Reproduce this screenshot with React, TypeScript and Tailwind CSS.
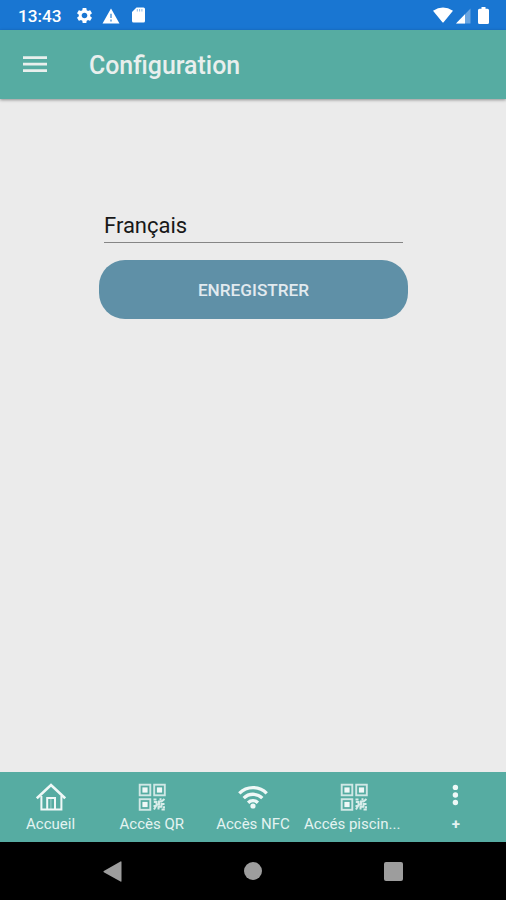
import { MdSettings } from "react-icons/md";

function HomeIcon() {
  return (
    <svg width="30" height="28" viewBox="0 0 30 28" fill="none" stroke="currentColor">
      <path d="M0.8 15.4 15 2 29.2 15.4" strokeWidth="2.6" />
      <path d="M5.4 13V26.4H11.2V14.9H19V26.4H25.4V13M11 26.4H19" strokeWidth="2" />
      <path d="M14.9 15V26" strokeWidth="0.8" opacity="0.6" />
    </svg>
  );
}

function QrIcon() {
  return (
    <svg width="28" height="28" viewBox="0 0 28 28" fill="none" stroke="currentColor">
      <g strokeWidth="1.9" opacity="0.8">
        <rect x="1.7" y="1.7" width="10.6" height="10.6" />
        <rect x="16.2" y="1.7" width="10.6" height="10.6" />
        <rect x="1.7" y="16.2" width="10.6" height="10.6" />
      </g>
      <g fill="currentColor" stroke="none">
        <rect x="4.4" y="4.4" width="5.2" height="5.2" />
        <rect x="18.9" y="4.4" width="5.2" height="5.2" />
        <rect x="4.4" y="18.9" width="5.2" height="5.2" />
      </g>
      <path
        d="M15.5 16.4H18.5M21.5 16.2H23.5M15.8 19H18.5V21.5H21V18.5H23.5L26.5 16M15.5 23H18L16 26.5M20.5 26.5V23.8H23.5V21H26.5M25 24.2H27M23.5 26.5H26.8"
        strokeWidth="2"
        opacity="0.85"
      />
    </svg>
  );
}

function WifiIcon() {
  return (
    <svg width="30" height="28" viewBox="0 0 30 28" fill="none" stroke="currentColor" strokeWidth="3.3">
      <path d="M1.3 10.3A19.2 19.2 0 0 1 28.7 10.3" />
      <path d="M5.7 15.1A13.2 13.2 0 0 1 24.3 15.1" />
      <path d="M10.1 19.7A7 7 0 0 1 19.9 19.7" />
      <circle cx="15" cy="23" r="2.6" fill="currentColor" stroke="none" />
    </svg>
  );
}

function DotsIcon() {
  return (
    <svg width="8" height="28" viewBox="0 0 8 28" fill="currentColor">
      <circle cx="4.4" cy="4.4" r="2.7" />
      <circle cx="4.4" cy="12" r="2.7" />
      <circle cx="4.4" cy="19.5" r="2.7" />
    </svg>
  );
}

const labelStyle = "mt-[4px] whitespace-nowrap text-[15px] leading-[18px] text-[#e4f3f1]";

const tabs = [
  { label: "Accueil", icon: <HomeIcon />, className: labelStyle },
  { label: "Accès QR", icon: <QrIcon />, className: labelStyle },
  { label: "Accès NFC", icon: <WifiIcon />, className: labelStyle },
  { label: "Accés piscin...", icon: <QrIcon />, className: `${labelStyle} pr-[4px]` },
  { label: "+", icon: <DotsIcon />, className: `${labelStyle} pl-px font-bold` },
];

export default function App() {
  return (
    <div className="flex h-[900px] w-[506px] flex-col overflow-hidden bg-[#ebebeb] font-['Roboto',sans-serif]">

      {/* Status bar */}
      <div className="flex h-[30px] shrink-0 items-center bg-[#1976d2] pl-[18px] pr-[17px] text-white">
        <span className="w-[57px] pt-[2px] text-[17.2px] font-medium leading-[30px]">13:43</span>
        <MdSettings size={19} className="mt-px" />
        <svg className="ml-2 mt-px" width="18" height="16" viewBox="0 0 18 16">
          <path d="M9 0.5 17.5 15.5H0.5Z" fill="currentColor" />
          <path d="M9 5.8V10M9 11.6V13.4" stroke="#1976d2" strokeWidth="1.5" opacity="0.75" />
        </svg>
        <svg className="ml-3" width="13" height="16" viewBox="0 0 13 16">
          <path d="M4.5 0.5H11.5Q13 0.5 13 2V14Q13 15.5 11.5 15.5H1.5Q0 15.5 0 14V5Z" fill="currentColor" />
          <path d="M5.3 2V4.5M7.6 2V4.5M9.9 2V4.5" stroke="#1976d2" strokeWidth="1" opacity="0.5" />
        </svg>

        <svg className="ml-auto" width="20" height="16" viewBox="0 0 20 16">
          <path d="M0 3.8Q10-3 20 3.8L10.8 15Q10 16 9.2 15Z" fill="currentColor" />
        </svg>
        <svg className="ml-[3px] mt-px" width="15" height="16" viewBox="0 0 15 16">
          <path d="M14.5 0.5V15.5H0Z" fill="currentColor" opacity="0.35" />
          <path d="M9 6.2V15.5H0Z" fill="currentColor" />
        </svg>
        <svg className="ml-[7px]" width="11" height="17" viewBox="0 0 11 17">
          <path d="M3.5 0H7.5V1.8H9.5Q11 1.8 11 3.3V15.5Q11 17 9.5 17H1.5Q0 17 0 15.5V3.3Q0 1.8 1.5 1.8H3.5Z" fill="currentColor" />
        </svg>
      </div>

      {/* Toolbar */}
      <header className="z-10 flex h-[69px] shrink-0 items-center bg-[#56aca2] pl-[23px] text-[#e9efed] shadow-[0_1px_3px_rgba(0,0,0,0.4)]">
        <button aria-label="Menu">
          <svg width="24" height="17" viewBox="0 0 24 17" fill="currentColor">
            <path d="M0 0.2H24V2.9H0ZM0 6.7H24V9.4H0ZM0 13.2H24V15.9H0Z" />
          </svg>
        </button>
        <h1 className="ml-[42px] mt-[3px] text-[24.9px] font-medium leading-8">Configuration</h1>
      </header>

      {/* Form */}
      <main className="flex flex-1 flex-col items-center pl-px pt-[110px]">
        <div className="h-[34px] w-[299px] border-b-[1.5px] border-[#858585] text-[22px] leading-[33px] text-[#181818]">
          Français
        </div>
        <button className="mt-[17px] h-[59px] w-[309px] rounded-[26px] bg-[#5f90a7] pt-[3px] text-[17.2px] font-medium text-[#e2eaef]">
          ENREGISTRER
        </button>
      </main>

      {/* Bottom tabs */}
      <nav className="grid h-[70px] shrink-0 grid-cols-5 bg-[#56aca2] text-[#eff8f7]">
        {tabs.map((tab) => (
          <div key={tab.label} className="flex flex-col items-center pt-[11px]">
            {tab.icon}
            <span className={tab.className}>{tab.label}</span>
          </div>
        ))}
      </nav>

      {/* System navigation */}
      <div className="flex h-[58px] shrink-0 items-center justify-between bg-black pl-[103px] pr-[103px] text-[#9d9d9d]">
        <svg width="19" height="21" viewBox="0 0 19 21">
          <path d="M18.5 1V20Q18.5 21 17.5 20.4L0.8 11.2Q0 10.6 0.8 10L17.5 0.4Q18.5 0 18.5 1Z" fill="currentColor" />
        </svg>
        <span className="size-[18px] rounded-full bg-current" />
        <span className="size-[19px] rounded-[2px] bg-current" />
      </div>
    </div>
  );
}
